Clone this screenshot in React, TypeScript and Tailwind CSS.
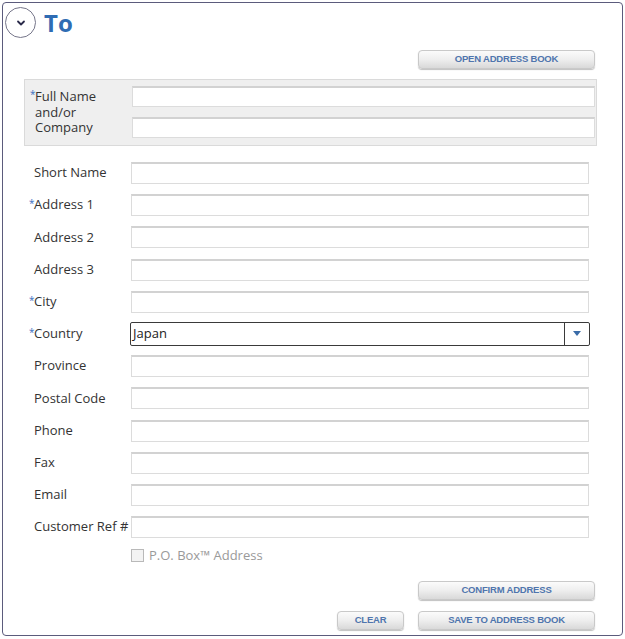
import React from "react";

const font = { fontFamily: '"Open Sans", "Noto Sans", sans-serif' };

function Btn({ children, w }: { children: React.ReactNode; w: string }) {
  return (
    <button
      className={`${w} h-[19px] rounded-[4px] border border-[#c9c9c9] bg-gradient-to-b from-[#fbfbfb] via-[#eeeeee] to-[#d9d9d9] shadow-[0_1px_1px_rgba(0,0,0,0.25)] text-[9.5px] font-bold text-[#4f75ad] tracking-[-0.2px] flex items-center justify-center`}
      style={{ fontFamily: '"Liberation Sans", Arial, sans-serif' }}
    >
      {children}
    </button>
  );
}

function Input() {
  return (
    <div className="w-[458px] h-[22px] bg-white border border-[#dcdcdc] border-t-2 border-t-[#d2d2d2]" />
  );
}

function Row({ label, req, children }: { label: string; req?: boolean; children?: React.ReactNode }) {
  return (
    <div className="flex items-center h-[22px]">
      <div className="w-[102px] flex items-center text-[13px] text-[#333] whitespace-nowrap">
        <span className={`w-[5px] text-[#3a6fc0] text-[10px] self-start mt-[1px] ${req ? "" : "invisible"}`}>*</span>
        <span>{label}</span>
      </div>
      {children ?? <Input />}
    </div>
  );
}

export default function App() {
  return (
    <div className="w-[625px] h-[639px] bg-white pt-[2px] pl-[2px]" style={font}>
      <div className="w-[621px] h-[634px] border border-[#5b5b7c] rounded-[4px] relative">
        {/* header */}
        <div className="flex items-center pt-[4px] pl-[2px] h-[35px]">
          <div className="w-[31px] h-[31px] rounded-full border-[1.5px] border-[#76768a] flex items-center justify-center">
            <svg width="10" height="8" viewBox="0 0 10 8">
              <path d="M2 2.5 L5 5.5 L8 2.5" stroke="#2a2a4a" strokeWidth="1.8" fill="none" strokeLinecap="round" strokeLinejoin="round" />
            </svg>
          </div>
          <div className="ml-[8px] text-[24px] font-bold text-[#2f6cb3] leading-none" style={{ fontFamily: '"Open Sans", sans-serif' }}>
            To
          </div>
        </div>
        {/* open address book */}
        <div className="flex justify-end pr-[27px] mt-[12px]">
          <Btn w="w-[177px]">OPEN ADDRESS BOOK</Btn>
        </div>
        {/* name box */}
        <div className="ml-[21px] mt-[10px] w-[573px] h-[67px] bg-[#efefef] border border-[#dadada] flex pt-[6px]">
          <div className="w-[107px] pl-[5px] text-[13px] leading-[15.5px] text-[#333] pt-[3px]">
            <div className="flex">
              <span className="w-[5px] text-[#3a6fc0] text-[10px] leading-[10px]">*</span>
              <span>Full Name</span>
            </div>
            <div className="pl-[5px]">and/or</div>
            <div className="pl-[5px]">Company</div>
          </div>
          <div className="flex flex-col gap-[10px]">
            <div className="w-[463px] h-[21px] bg-white border border-[#dcdcdc] border-t-2 border-t-[#d2d2d2]" />
            <div className="w-[463px] h-[21px] bg-white border border-[#dcdcdc] border-t-2 border-t-[#d2d2d2]" />
          </div>
        </div>
        {/* rows */}
        <div className="ml-[26px] mt-[16px] flex flex-col gap-[10.2px]">
          <Row label="Short Name" />
          <Row label="Address 1" req />
          <Row label="Address 2" />
          <Row label="Address 3" />
          <Row label="City" req />
          <Row label="Country" req>
            <div className="-ml-[1px] w-[460px] h-[24px] border border-[#3a3a3a] rounded-[2px] flex items-center bg-white">
              <div className="flex-1 pl-[2px] text-[13px] text-[#222]">Japan</div>
              <div className="w-[25px] h-full border-l border-[#3a3a3a] flex items-center justify-center">
                <svg width="8" height="5" viewBox="0 0 8 5">
                  <path d="M0 0 L8 0 L4 5 Z" fill="#3a6ca8" />
                </svg>
              </div>
            </div>
          </Row>
          <Row label="Province" />
          <Row label="Postal Code" />
          <Row label="Phone" />
          <Row label="Fax" />
          <Row label="Email" />
          <Row label="Customer Ref #" />
        </div>
        <div className="ml-[128px] mt-[8px] flex items-center">
          <div className="w-[13px] h-[13px] border border-[#b9b9b9] bg-[#f3f3f3]" />
          <span className="ml-[5px] text-[13px] text-[#9a9a9a]">P.O. Box™ Address</span>
        </div>
        <div className="flex justify-end pr-[27px] mt-[15px]">
          <Btn w="w-[177px]">CONFIRM ADDRESS</Btn>
        </div>
        <div className="flex justify-end pr-[27px] mt-[11px] gap-[14px]">
          <Btn w="w-[67px]">CLEAR</Btn>
          <Btn w="w-[177px]">SAVE TO ADDRESS BOOK</Btn>
        </div>
      </div>
    </div>
  );
}
